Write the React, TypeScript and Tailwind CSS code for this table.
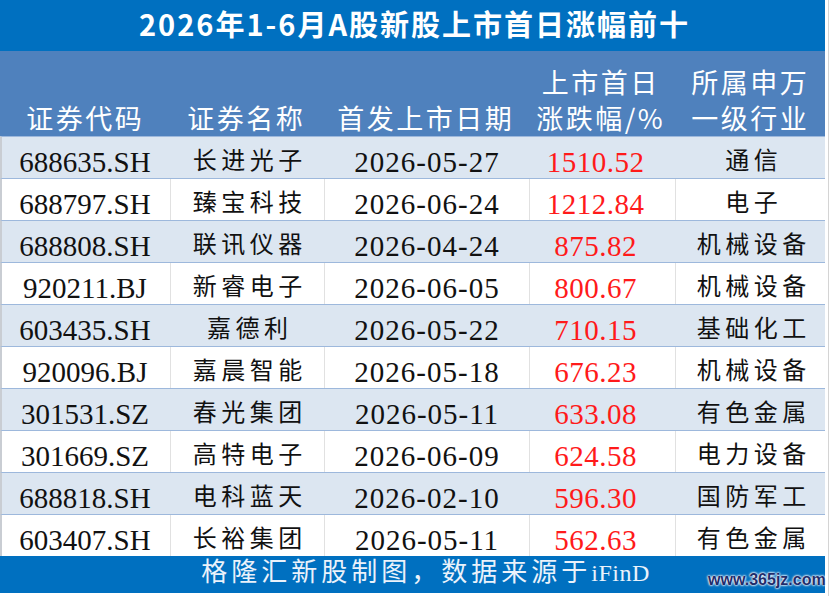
const ROWS: [string, string, string, string, string][] = [
  ["688635.SH", "长进光子", "2026-05-27", "1510.52", "通信"],
  ["688797.SH", "臻宝科技", "2026-06-24", "1212.84", "电子"],
  ["688808.SH", "联讯仪器", "2026-04-24", "875.82", "机械设备"],
  ["920211.BJ", "新睿电子", "2026-06-05", "800.67", "机械设备"],
  ["603435.SH", "嘉德利", "2026-05-22", "710.15", "基础化工"],
  ["920096.BJ", "嘉晨智能", "2026-05-18", "676.23", "机械设备"],
  ["301531.SZ", "春光集团", "2026-05-11", "633.08", "有色金属"],
  ["301669.SZ", "高特电子", "2026-06-09", "624.58", "电力设备"],
  ["688818.SH", "电科蓝天", "2026-02-10", "596.30", "国防军工"],
  ["603407.SH", "长裕集团", "2026-05-11", "562.63", "有色金属"],
]

const cols = "grid grid-cols-[168px_154px_205px_146px_152px]"
const num = "font-['Liberation_Serif',serif] text-[29px] leading-[32px] pt-[9px] text-center"
const cjk =
  "font-['Noto_Sans_CJK_SC',sans-serif] text-[24px] leading-[32px] pt-[6px] tracking-[4.5px] pl-[4.5px] text-center"

export default function App() {
  return (
    <div className="relative w-[831px] h-[596px] bg-white flex overflow-hidden">
      <div className="w-[825px] flex flex-col">
        {/* Title */}
        <div className="h-[51px] bg-[#0070c0] text-white text-center font-['Noto_Sans_CJK_SC',sans-serif] font-bold text-[29px] leading-[47px] tracking-[2px] pl-[4px]">
          2026年1-6月A股新股上市首日涨幅前十
        </div>

        {/* Header */}
        <div
          className={`${cols} h-[85px] bg-[#4f81bd] text-white font-['Noto_Sans_CJK_SC',sans-serif] text-[27px] leading-[36px] tracking-[2.5px]`}
        >
          <div className="flex flex-col justify-end items-center pl-[2.5px]">证券代码</div>
          <div className="flex flex-col justify-end items-center pl-[2.5px]">证券名称</div>
          <div className="flex flex-col justify-end items-center pl-[2.5px]">首发上市日期</div>
          <div className="flex flex-col justify-end items-center pl-[2.5px] pr-[1px]">
            <span>上市首日</span>
            <span>涨跌幅/%</span>
          </div>
          <div className="flex flex-col justify-end items-center pl-[2.5px]">
            <span>所属申万</span>
            <span>一级行业</span>
          </div>
        </div>

        {/* Rows */}
        {ROWS.map(([code, name, date, pct, ind], i) => {
          const blue = i % 2 === 0
          const sep = blue ? "border-l border-[#dce6f1]" : "border-l border-[#e1e1e1]"
          return (
            <div
              key={code}
              className={`${cols} h-[42px] border-t border-[#9db8dc] border-l-2 border-l-[#c9cdd3] text-[#111] ${
                blue ? "bg-[#dce6f1]" : "bg-white"
              }`}
            >
              <div className={`${num} -ml-[2px]`}>{code}</div>
              <div className={`${cjk} ${sep}`}>{name}</div>
              <div className={`${num} ${sep} tracking-[1px]`}>{date}</div>
              <div className={`${num} ${sep} tracking-[0.5px] pr-[14px] text-[#ff1a1a]`}>{pct}</div>
              <div className={`${cjk} ${sep}`}>{ind}</div>
            </div>
          )
        })}

        {/* Footer */}
        <div className="h-[37px] bg-[#0070c0] text-[#eaf2fb] text-center pl-[26px] font-['Liberation_Serif','Noto_Sans_CJK_SC',sans-serif] text-[26px] leading-[34px] tracking-[4px]">
          格隆汇新股制图，数据来源于<span className="text-[24px] tracking-[0.5px]">iFinD</span>
        </div>
      </div>

      {/* right margin */}
      <div className="flex-1 flex">
        <div className="w-[3px]" />
        <div className="w-px bg-[#d4d4d4]" />
      </div>

      {/* watermark */}
      <div className="absolute left-[708px] top-[571px] font-['Liberation_Sans',sans-serif] font-bold text-[16px] leading-[18px] text-[#1f2d6b] [text-shadow:0_0_2px_#fff,0_0_2px_#fff,0_0_3px_#fff]">
        www.365jz.com
      </div>
    </div>
  )
}
